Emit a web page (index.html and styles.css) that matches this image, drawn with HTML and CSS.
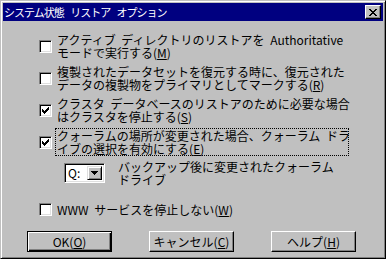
FILE: index.html
```html
<!DOCTYPE html>
<html lang="ja">
<head>
  <meta charset="UTF-8" />
  <title>システム状態 リストア オプション</title>
  <link rel="stylesheet" href="styles.css">
</head>
<body>

<div class="dialog">
  <div class="titlebar">
    <span class="title">システム状態 リストア オプション</span>
    <span class="close">
      <svg width="8" height="7" viewBox="0 0 8 7" shape-rendering="crispEdges">
        <path d="M0 0h2v1h-2zM6 0h2v1h-2zM1 1h2v1h-2zM5 1h2v1h-2zM2 2h4v1h-4zM3 3h2v1h-2zM2 4h4v1h-4zM1 5h2v1h-2zM5 5h2v1h-2zM0 6h2v1h-2zM6 6h2v1h-2z" fill="#000"/>
      </svg>
    </span>
  </div>

  <div class="content">
    <div class="options">
      <div class="option">
        <span class="check"></span>
        <span class="label">アクティブ ディレクトリのリストアを Authoritative<br>モードで実行する(<u>M</u>)</span>
      </div>
      <div class="option">
        <span class="check"></span>
        <span class="label">複製されたデータセットを復元する時に、復元された<br>データの複製物をプライマリとしてマークする(<u>R</u>)</span>
      </div>
      <div class="option">
        <span class="check checked">
          <svg width="7" height="7" viewBox="0 0 7 7" shape-rendering="crispEdges"><path d="M6 0h1v3h-1zM5 1h1v3h-1zM4 2h1v3h-1zM0 2h1v3h-1zM1 3h1v3h-1zM3 3h1v3h-1zM2 4h1v3h-1z" fill="#000"/></svg>
        </span>
        <span class="label">クラスタ データベースのリストアのために必要な場合<br>はクラスタを停止する(<u>S</u>)</span>
      </div>
      <div class="option">
        <span class="check checked">
          <svg width="7" height="7" viewBox="0 0 7 7" shape-rendering="crispEdges"><path d="M6 0h1v3h-1zM5 1h1v3h-1zM4 2h1v3h-1zM0 2h1v3h-1zM1 3h1v3h-1zM3 3h1v3h-1zM2 4h1v3h-1z" fill="#000"/></svg>
        </span>
        <span class="label focused">クォーラムの場所が変更された場合、クォーラム ドラ<br>イブの選択を有効にする(<u>E</u>)</span>
      </div>

      <div class="drive-row">
        <div class="combo">
          <span class="combo-value">Q:</span>
          <span class="combo-btn">
            <svg width="7" height="4" viewBox="0 0 7 4" shape-rendering="crispEdges"><path d="M0 0h7v1h-7zM1 1h5v1h-5zM2 2h3v1h-3zM3 3h1v1h-1z" fill="#000"/></svg>
          </span>
        </div>
        <span class="drive-label">バックアップ後に変更されたクォーラム<br>ドライブ</span>
      </div>

      <div class="option single">
        <span class="check"></span>
        <span class="label">WWW サービスを停止しない(<u>W</u>)</span>
      </div>
    </div>

    <div class="buttons">
      <button class="btn default">OK(<u>O</u>)</button>
      <button class="btn">キャンセル(<u>C</u>)</button>
      <button class="btn">ヘルプ(<u>H</u>)</button>
    </div>
  </div>
</div>

</body>
</html>
```

FILE: styles.css
```css
body {
  margin: 0;
  font-family: "Noto Sans CJK JP", sans-serif;
  font-size: 12px;
  color: #000;
}

.dialog {
  width: 386px;
  height: 259px;
  box-sizing: border-box;
  background-color: #c0c0c0;
  border: 1px solid;
  border-color: #c0c0c0 #000 #000 #c0c0c0;
  box-shadow: inset 1px 1px #fff, inset -1px -1px #808080;
  padding: 2px;
}

/* タイトルバー */
.titlebar {
  height: 18px;
  background-color: #000080;
  color: #fff;
  display: flex;
  align-items: center;
  justify-content: space-between;
  padding: 0 2px 0 1px;
}

.title {
  font-size: 11px;
  letter-spacing: -1px;
  word-spacing: 5px;
  line-height: 18px;
  white-space: pre;
}

.close {
  width: 16px;
  height: 14px;
  box-sizing: border-box;
  background-color: #c0c0c0;
  border: 1px solid;
  border-color: #fff #000 #000 #fff;
  box-shadow: inset -1px -1px #808080;
  display: flex;
  align-items: center;
  justify-content: center;
}

.content {
  padding-top: 11px;
}

.options {
  padding-left: 36px;
}

.option {
  display: flex;
  align-items: center;
  margin-bottom: 4px;
}

.check {
  width: 13px;
  height: 13px;
  box-sizing: border-box;
  flex-shrink: 0;
  background-color: #fff;
  border: 1px solid;
  border-color: #808080 #fff #fff #808080;
  box-shadow: inset 1px 1px #000, inset -1px -1px #dfdfdf;
  display: flex;
  align-items: center;
  justify-content: center;
  margin-right: 3px;
}

.label {
  line-height: 13px;
  word-spacing: 3px;
  padding: 0 1px;
  border: 1px solid transparent;
  white-space: nowrap;
}

.label.focused {
  border: 1px dotted #000;
  width: 290px;
}

.label u,
.btn u {
  text-underline-offset: 1px;
}

/* ドライブ選択 */
.drive-row {
  display: flex;
  align-items: center;
  margin: 4px 0 16px 25px;
}

.combo {
  width: 41px;
  height: 20px;
  box-sizing: border-box;
  background-color: #fff;
  border: 1px solid;
  border-color: #808080 #fff #fff #808080;
  box-shadow: inset 1px 1px #000, inset -1px -1px #dfdfdf;
  display: flex;
  align-items: center;
  padding: 2px;
}

.combo-value {
  flex: 1;
  padding-left: 1px;
  line-height: 14px;
}

.combo-btn {
  width: 15px;
  height: 14px;
  box-sizing: border-box;
  background-color: #c0c0c0;
  border: 1px solid;
  border-color: #dfdfdf #000 #000 #dfdfdf;
  box-shadow: inset 1px 1px #fff, inset -1px -1px #808080;
  display: flex;
  align-items: center;
  justify-content: center;
}

.drive-label {
  margin-left: 13px;
  line-height: 13px;
  white-space: nowrap;
}

.option.single {
  margin-bottom: 14px;
}

/* ボタン */
.buttons {
  display: flex;
  gap: 37px;
  padding-left: 24px;
}

.btn {
  width: 85px;
  height: 21px;
  box-sizing: border-box;
  font-family: inherit;
  font-size: 12px;
  line-height: 13px;
  color: #000;
  background-color: #c0c0c0;
  border: 1px solid;
  border-color: #fff #000 #000 #fff;
  box-shadow: inset -1px -1px #808080;
  padding: 0;
}

.btn.default {
  border: 1px solid #000;
  box-shadow: inset 1px 1px #fff, inset -1px -1px #000, inset -2px -2px #808080;
}
```
